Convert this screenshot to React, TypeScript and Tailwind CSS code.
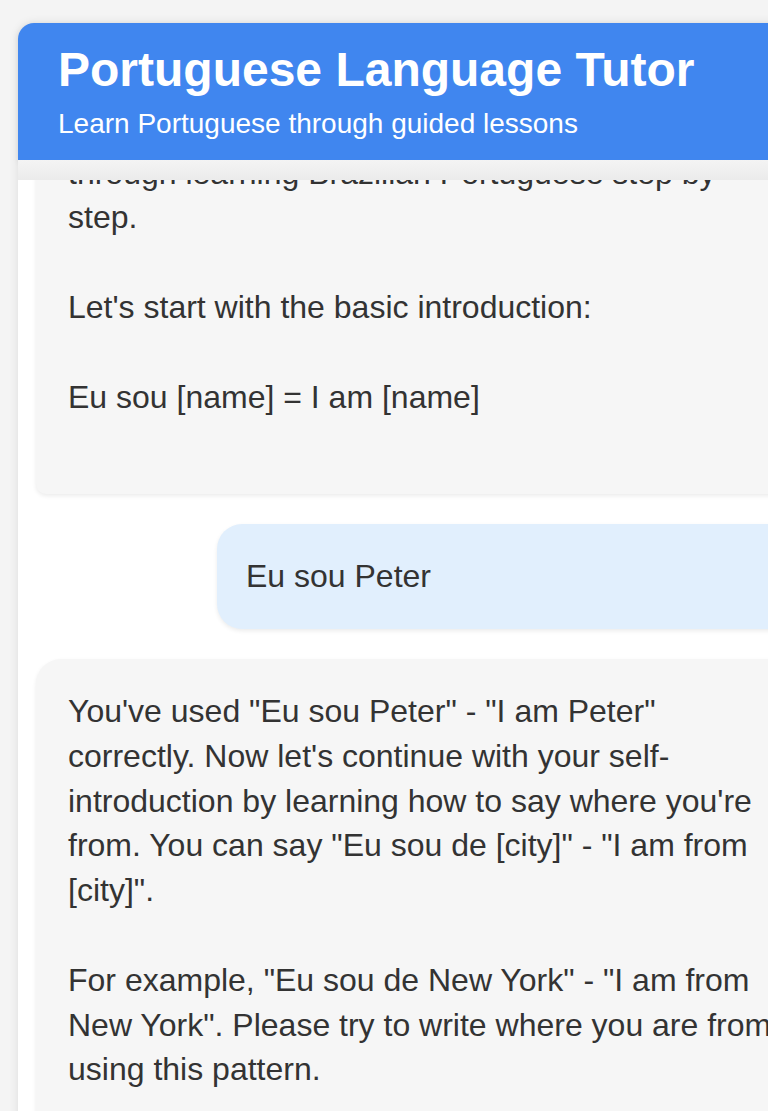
import { useLayoutEffect, useRef } from "react";

type Message = {
  type: "AI" | "HUMAN";
  paragraphs: string[];
};

const messages: Message[] = [
  {
    type: "AI",
    paragraphs: [
      "Olá! Welcome to your first lesson.",
      "I'm your Portuguese tutor and I'll guide you through learning Brazilian Portuguese step by step.",
      "Let's start with the basic introduction:",
      "Eu sou [name] = I am [name]",
    ],
  },
  { type: "HUMAN", paragraphs: ["Eu sou Peter"] },
  {
    type: "AI",
    paragraphs: [
      'You\'ve used "Eu sou Peter" - "I am Peter" correctly. Now let\'s continue with your self-introduction by learning how to say where you\'re from. You can say "Eu sou de [city]" - "I am from [city]".',
      'For example, "Eu sou de New York" - "I am from New York". Please try to write where you are from using this pattern.',
    ],
  },
];

export default function App() {
  const chatRef = useRef<HTMLDivElement>(null);
  const anchorRef = useRef<HTMLDivElement>(null);

  // keep the conversation scrolled to where the user's reply sits
  useLayoutEffect(() => {
    if (chatRef.current && anchorRef.current) {
      chatRef.current.scrollTop = anchorRef.current.offsetTop - 344;
    }
  }, []);

  return (
    <div className="h-[1111px] w-full overflow-hidden bg-[#f4f4f4] pl-[18px] pt-[23px] font-['Liberation_Sans',Arial,sans-serif] text-[#333333]">
      <div className="flex w-[812px] shrink-0 flex-col rounded-t-[16px] shadow-[0_0_10px_rgba(0,0,0,0.1)]">
        <header className="rounded-t-[16px] bg-[#4086ef] px-[40px] pb-[20px] pt-[18px] text-white shadow-[0_2px_6px_rgba(0,0,0,0.08)]">
          <h1 className="text-[48px] font-bold leading-[1.2]">Portuguese Language Tutor</h1>
          <p className="mt-[8px] text-[28px] leading-[1.2]">Learn Portuguese through guided lessons</p>
        </header>
        <div className="h-[20px] bg-gradient-to-b from-[#f4f4f4] to-[#ebebeb]" />
        <div
          ref={chatRef}
          className="relative flex h-[960px] flex-col gap-[30px] overflow-y-auto bg-white p-[18px] [scrollbar-width:none]"
        >
          {messages.map((message, indx) =>
            message.type === "AI" ? (
              <div
                key={indx}
                className="rounded-[25px] rounded-bl-[10px] bg-[#f6f6f6] px-[32px] py-[30px] text-[32px] leading-[1.4] shadow-[0_2px_4px_rgba(0,0,0,0.08)]"
              >
                {message.paragraphs.map((p, i) => (
                  <p key={i} className="mb-[44.8px]">
                    {p}
                  </p>
                ))}
              </div>
            ) : (
              <div
                key={indx}
                ref={anchorRef}
                className="ml-[181px] rounded-[25px] rounded-br-[10px] bg-[#e1effd] py-[30px] pl-[29px] pr-[32px] text-[32px] leading-[1.4] shadow-[0_2px_4px_rgba(0,0,0,0.08)]"
              >
                {message.paragraphs[0]}
              </div>
            )
          )}
        </div>
      </div>
    </div>
  );
}
